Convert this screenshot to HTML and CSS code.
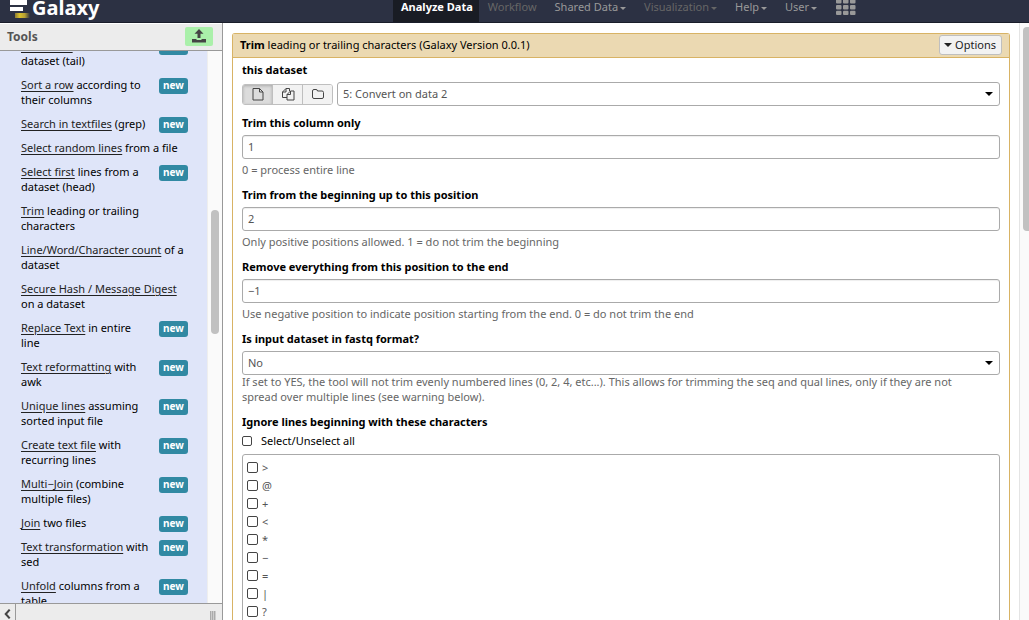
FILE: index.html
```html
<!DOCTYPE html>
<html lang="en">
<head>
<meta charset="utf-8">
<title>Galaxy</title>
<link rel="stylesheet" href="styles.css">
</head>
<body>
<header class="masthead">
  <a class="brand" href="#">
    <svg class="brand-mark" width="22" height="18" viewBox="0 0 22 18" aria-hidden="true">
      <defs><linearGradient id="gold"><stop offset="0" stop-color="#8d7c35"/><stop offset=".3" stop-color="#d9bf2c"/><stop offset=".65" stop-color="#b6a034"/><stop offset="1" stop-color="#2c3143"/></linearGradient></defs>
      <path fill="#fff" d="M1 0h17v5H1zM1 7h13v4H1z"/>
      <path fill="url(#gold)" d="M6 13h15v5H6z"/>
    </svg>
    <span class="brand-name">Galaxy</span>
  </a>
  <nav class="nav">
    <a class="nav-link active" href="#">Analyze Data</a>
    <a class="nav-link dim" href="#">Workflow</a>
    <a class="nav-link" href="#">Shared Data<i class="caret"></i></a>
    <a class="nav-link dim" href="#">Visualization<i class="caret"></i></a>
    <a class="nav-link" href="#">Help<i class="caret"></i></a>
    <a class="nav-link" href="#">User<i class="caret"></i></a>
    <a class="nav-link apps" href="#" aria-label="Apps">
      <svg width="20" height="15" viewBox="0 0 20 15" fill="#999" aria-hidden="true">
        <path d="M0 0h5.500v2.500q0 1-1 1h-3.500q-1 0-1-1zM7 0h5.500v2.500q0 1-1 1h-3.500q-1 0-1-1zM14 0h5.500v2.500q0 1-1 1h-3.500q-1 0-1-1z"/>
        <rect x="0" y="5" width="5.500" height="4.500" rx="1"/><rect x="7" y="5" width="5.500" height="4.500" rx="1"/><rect x="14" y="5" width="5.500" height="4.500" rx="1"/>
        <rect x="0" y="10.700" width="5.500" height="4.300" rx="1"/><rect x="7" y="10.700" width="5.500" height="4.300" rx="1"/><rect x="14" y="10.700" width="5.500" height="4.300" rx="1"/>
      </svg>
    </a>
  </nav>
</header>
<div class="columns">
  <aside class="sidebar">
    <div class="side-head">
      <span class="side-title">Tools</span>
      <button class="upload" type="button" aria-label="Upload data">
        <svg width="16" height="14" viewBox="0 0 16 14" fill="#444" aria-hidden="true"><path d="M8 0l4.500 4.700H9.500V9h-3V4.700h-3z"/><path d="M1 10h4.500v1h5v-1H15v3.500H1z"/></svg>
      </button>
    </div>
    <div class="side-body">
      <ul class="tools">
        <li><p><a href="#">Select last</a> lines from a<br>dataset (tail)</p><span class="new">new</span></li>
        <li><p><a href="#">Sort a row</a> according to<br>their columns</p><span class="new">new</span></li>
        <li><p><a href="#">Search in textfiles</a> (grep)</p><span class="new">new</span></li>
        <li><p><a href="#">Select random lines</a> from a file</p></li>
        <li><p><a href="#">Select first</a> lines from a<br>dataset (head)</p><span class="new">new</span></li>
        <li><p><a href="#">Trim</a> leading or trailing<br>characters</p></li>
        <li><p><a href="#">Line/Word/Character count</a> of a<br>dataset</p></li>
        <li><p><a href="#">Secure Hash / Message Digest</a><br>on a dataset</p></li>
        <li><p><a href="#">Replace Text</a> in entire<br>line</p><span class="new">new</span></li>
        <li><p><a href="#">Text reformatting</a> with<br>awk</p><span class="new">new</span></li>
        <li><p><a href="#">Unique lines</a> assuming<br>sorted input file</p><span class="new">new</span></li>
        <li><p><a href="#">Create text file</a> with<br>recurring lines</p><span class="new">new</span></li>
        <li><p><a href="#">Multi−Join</a> (combine<br>multiple files)</p><span class="new">new</span></li>
        <li><p><a href="#">Join</a> two files</p><span class="new">new</span></li>
        <li><p><a href="#">Text transformation</a> with<br>sed</p><span class="new">new</span></li>
        <li><p><a href="#">Unfold</a> columns from a<br>table</p><span class="new">new</span></li>
      </ul>
      <div class="track side-track"><div class="thumb side-thumb"></div></div>
    </div>
    <div class="side-foot">
      <button class="collapse" type="button" aria-label="Collapse panel">
        <svg width="8" height="12" viewBox="0 0 8 12" aria-hidden="true"><path d="M6.500 1L2 6l4.500 5" fill="none" stroke="#444" stroke-width="2.400"/></svg>
      </button>
      <span class="grip"></span>
    </div>
  </aside>
  <main class="main">
    <form class="tool-form">
      <div class="form-head">
        <h1 class="form-title"><b>Trim</b> leading or trailing characters (Galaxy Version 0.0.1)</h1>
        <button class="options" type="button"><i class="caret"></i>Options</button>
      </div>
      <div class="form-body">
        <div class="group first">
          <label for="dataset">this dataset</label>
          <div class="dataset-row">
            <div class="kinds">
              <button class="kind on" type="button" aria-label="Single dataset"><svg width="12" height="14" viewBox="0 0 12 14" aria-hidden="true"><path d="M1 1.500h6.500l3.500 3.500v8H1zM7.500 1.500V5H11"/></svg></button>
              <button class="kind" type="button" aria-label="Multiple datasets"><svg width="14" height="14" viewBox="0 0 14 14" aria-hidden="true"><path d="M6 10.500H1.500V5L5 1.500h3.500V4M5 1.500V5H1.500M9.500 4H13v9H6V7.500zM9.500 4v3.500H6"/></svg></button>
              <button class="kind" type="button" aria-label="Dataset collection"><svg width="14" height="14" viewBox="0 0 14 14" aria-hidden="true"><path d="M1.500 4q0-1.500 1.500-1.500h2q1.500 0 1.500 1.500H11q1.500 0 1.500 1.500V10q0 1.500-1.500 1.500H3q-1.500 0-1.500-1.500z"/></svg></button>
            </div>
            <div class="pick"><select class="field" id="dataset"><option>5: Convert on data 2</option></select></div>
          </div>
        </div>
        <div class="group">
          <label for="col">Trim this column only</label>
          <input class="field" id="col" type="text" value="1">
          <p class="help">0 = process entire line</p>
        </div>
        <div class="group">
          <label for="start">Trim from the beginning up to this position</label>
          <input class="field" id="start" type="text" value="2">
          <p class="help">Only positive positions allowed. 1 = do not trim the beginning</p>
        </div>
        <div class="group">
          <label for="end">Remove everything from this position to the end</label>
          <input class="field" id="end" type="text" value="−1">
          <p class="help">Use negative position to indicate position starting from the end. 0 = do not trim the end</p>
        </div>
        <div class="group">
          <label for="fastq">Is input dataset in fastq format?</label>
          <div class="pick"><select class="field" id="fastq"><option>No</option></select></div>
          <p class="help tight">If set to YES, the tool will not trim evenly numbered lines (0, 2, 4, etc...). This allows for trimming the seq and qual lines, only if they are not spread over multiple lines (see warning below).</p>
        </div>
        <fieldset class="group">
          <legend>Ignore lines beginning with these characters</legend>
          <label class="all"><input class="tick small" type="checkbox">Select/Unselect all</label>
          <div class="choices">
            <label class="choice"><input class="tick" type="checkbox">&gt;</label>
            <label class="choice"><input class="tick" type="checkbox">@</label>
            <label class="choice"><input class="tick" type="checkbox">+</label>
            <label class="choice"><input class="tick" type="checkbox">&lt;</label>
            <label class="choice"><input class="tick" type="checkbox">*</label>
            <label class="choice"><input class="tick" type="checkbox">−</label>
            <label class="choice"><input class="tick" type="checkbox">=</label>
            <label class="choice"><input class="tick" type="checkbox">|</label>
            <label class="choice"><input class="tick" type="checkbox">?</label>
          </div>
        </fieldset>
      </div>
    </form>
    <div class="track main-track"><div class="thumb main-thumb"></div></div>
  </main>
</div>
</body>
</html>
```
FILE: styles.css
```css
* { box-sizing: border-box; }
body {
  margin: 0;
  height: 100vh;
  display: flex;
  flex-direction: column;
  overflow: hidden;
  background: #fff;
  color: #000;
  font: 11px/15px "Noto Sans", sans-serif;
}
button, input, select { font: inherit; color: inherit; margin: 0; }
p, ul, h1 { margin: 0; padding: 0; }
svg { display: block; }

.masthead {
  flex: none;
  display: grid;
  grid-template-columns: 393px 1fr;
  height: 23px;
  overflow: hidden;
  background: #2c3143;
  border-bottom: 1px solid #191d2a;
}
.brand { display: flex; gap: 1px; padding-left: 9px; color: #fff; text-decoration: none; }
.brand-name { font: bold 20px/16px "Noto Sans", sans-serif; }
.nav { display: flex; align-items: stretch; }
.nav-link {
  display: flex;
  align-items: center;
  padding: 0 10px 8px 8px;
  color: #999;
  line-height: 14px;
  text-decoration: none;
}
.nav-link.active { background: #191c24; color: #fff; font-weight: bold; padding-right: 6px; margin-right: 1px; }
.nav-link.dim { color: #666; }
.nav-link.apps { align-items: flex-start; padding: 0 9px; }
.caret {
  display: inline-block;
  border: 3px solid transparent;
  border-top-color: currentColor;
  border-bottom: 0;
  margin: 2px 0 0 2px;
}

.columns { flex: 1; display: flex; min-height: 0; }
.sidebar {
  flex: none;
  width: 223px;
  display: flex;
  flex-direction: column;
  border-right: 1px solid #999;
}
.side-head {
  flex: none;
  display: flex;
  align-items: center;
  justify-content: space-between;
  height: 28px;
  padding: 0 9px 2px 7px;
  border-top: 1px solid #fff;
  border-bottom: 1px solid #999;
  background: #ececec;
}
.side-title { color: #555; font-size: 12px; font-weight: bold; }
.upload {
  display: flex;
  align-items: center;
  justify-content: center;
  width: 28px;
  height: 19px;
  padding: 0;
  border: 0;
  border-radius: 2px;
  background: #aaf0aa;
}
.side-body { flex: 1; min-height: 0; display: flex; overflow: hidden; background: #dfe5f9; }
.tools { flex: 1; margin-top: -13px; padding-left: 21px; list-style: none; }
.tools li { display: flex; align-items: flex-start; margin-bottom: 9px; }
.tools p { flex: none; width: 134px; white-space: nowrap; }
.tools a { color: #222; text-decoration: underline; text-underline-offset: 2px; }
.new {
  width: 29px;
  height: 16px;
  margin: 1px 0 -2px 4px;
  border-radius: 3px;
  background: #3189a3;
  color: #fff;
  font-size: 10px;
  font-weight: bold;
  line-height: 15px;
  text-align: center;
}
.track { position: relative; flex: none; background: #fafafa; }
.side-track { width: 15px; border-left: 1px solid #eee; }
.thumb { position: absolute; background: #c1c1c1; }
.side-thumb { top: 159px; left: 3px; width: 8px; height: 124px; border-radius: 4px; }
.side-foot {
  flex: none;
  display: flex;
  justify-content: space-between;
  height: 17px;
  border-top: 1px solid #999;
  background: #ececec;
}
.collapse {
  display: flex;
  align-items: flex-end;
  width: 16px;
  padding: 0 4px;
  border: 0;
  border-right: 1px solid #999;
  background: none;
}
.grip {
  width: 6px;
  margin: 7px 6px 0 0;
  background: repeating-linear-gradient(90deg, #aaa 0 1px, #ccc 1px 2px);
}

.main { flex: 1; min-width: 0; display: flex; padding-left: 9px; }
.tool-form {
  flex: 1;
  min-width: 0;
  margin: 10px 9px 0 0;
  border: 1px solid #d8b365;
  border-bottom: 0;
  border-radius: 3px 3px 0 0;
}
.form-head {
  display: flex;
  align-items: center;
  justify-content: space-between;
  height: 24px;
  padding: 0 7px 1px;
  border-bottom: 1px solid #d8b365;
  background: #ebd9b2;
}
.form-title { padding-bottom: 2px; font-size: 11px; font-weight: normal; line-height: 15px; }
.options {
  display: flex;
  align-items: center;
  gap: 3px;
  height: 20px;
  padding: 0 5px 1px 4px;
  border: 1px solid #bfbfbf;
  border-radius: 3px;
  background: #f2f2f2;
  color: #222;
}
.options .caret { border-width: 4px 4px 0; margin: 0; }
.form-body { padding: 4px 9px 0; }
.group { min-width: 0; margin: 0 0 10px; padding: 0; border: 0; }
.group.first { margin-bottom: 9px; }
.group > label, legend { display: block; margin-bottom: 5px; padding: 0; font-weight: bold; }
.field {
  display: block;
  width: 100%;
  height: 24px;
  padding: 0 5px 2px;
  border: 1px solid #aaa;
  border-radius: 3px;
  background: #fff;
  color: #555;
  appearance: none;
}
input.field { box-shadow: inset 0 1px 1px #eee; }
.pick { position: relative; flex: 1; }
.pick::after {
  content: "";
  position: absolute;
  top: 10px;
  right: 7px;
  border: 4px solid transparent;
  border-top-color: #000;
  border-bottom: 0;
}
.dataset-row { display: flex; align-items: center; gap: 4px; }
.kinds { display: flex; border: 1px solid #bfbfbf; border-radius: 3px; overflow: hidden; }
.kind {
  display: flex;
  align-items: center;
  justify-content: center;
  width: 29px;
  height: 19px;
  padding: 0;
  border: 0;
  background: #f2f2f2;
}
.kind + .kind { width: 30px; border-left: 1px solid #bfbfbf; }
.kind.on { background: #dcdcdc; box-shadow: inset 0 1px 3px #aaa; }
.kind path { fill: none; stroke: #444; }
.help { margin-top: 3px; padding-right: 16px; color: #666; }
.help.tight { margin-top: -1px; }
.group > .all { display: flex; align-items: center; gap: 9px; margin: 0 0 6px; font-weight: normal; }
legend { margin-bottom: 4px; }
.tick {
  flex: none;
  width: 11px;
  height: 11px;
  margin: 0;
  border: 1px solid #444;
  border-radius: 2px;
  background: #fff;
  appearance: none;
}
.tick.small { width: 10px; height: 10px; }
.choices { padding: 3px 4px 40px; border: 1px solid #aaa; border-radius: 3px; }
.choice { display: flex; align-items: center; gap: 4px; height: 18px; color: #555; }
.main-track { width: 10px; border-left: 1px solid #e4e4e4; }
.main-thumb { top: 4px; right: 0; width: 6px; height: 204px; border-radius: 4px 0 0 4px; }
```
